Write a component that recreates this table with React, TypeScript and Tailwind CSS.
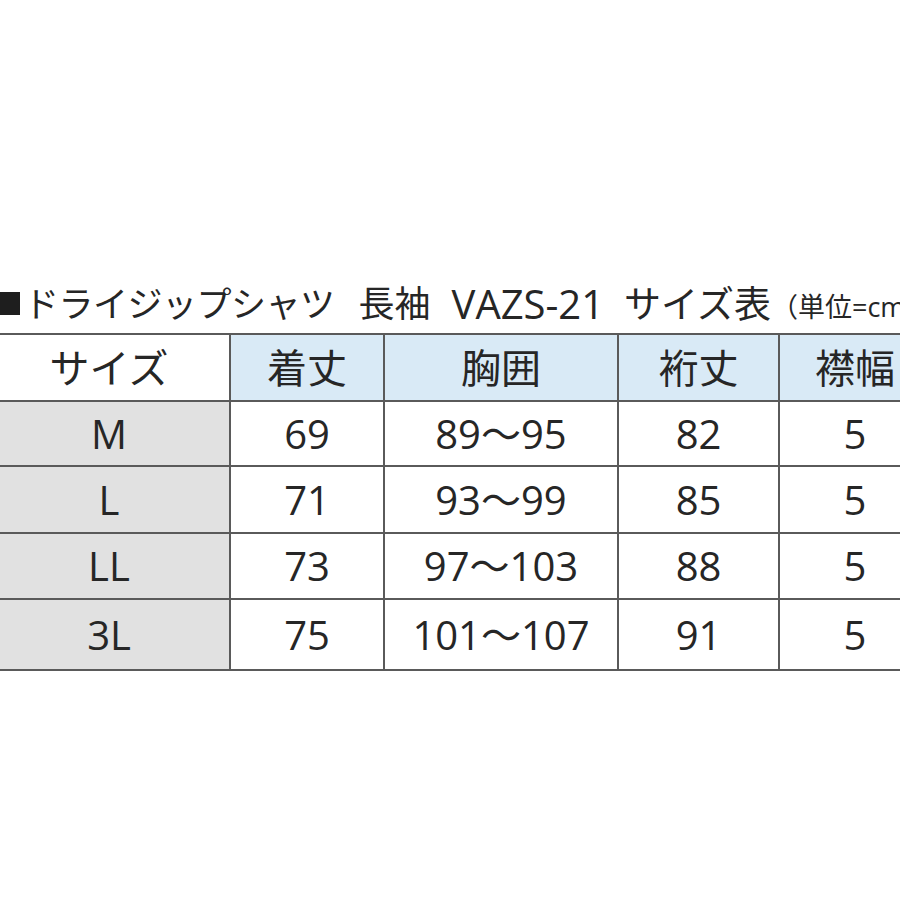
import React from "react";

const rows = [
  ["M", "69", "89～95", "82", "5"],
  ["L", "71", "93～99", "85", "5"],
  ["LL", "73", "97～103", "88", "5"],
  ["3L", "75", "101～107", "91", "5"],
];

const heads = ["着丈", "胸囲", "裄丈", "襟幅"];
const rowH = ["h-[63px]", "h-[65px]", "h-[64px]", "h-[69px]"];

const font = { fontFamily: '"Open Sans", "Noto Sans CJK JP", sans-serif' };

export default function App() {
  return (
    <div className="w-[900px] h-[900px] bg-white overflow-hidden text-[#262626]" style={font}>
      <div className="h-[274px]" />
      <div className="h-[59px] flex items-center whitespace-nowrap">
        <div className="w-[20px] h-[23px] bg-[#1e1e1e] shrink-0" />
        <span className="ml-[4px] text-[35px] leading-none tracking-[-0.5px]">ドライジップシャツ</span>
        <span className="ml-[24px] text-[36px] leading-none">長袖</span>
        <span className="ml-[21px] text-[40px] leading-none">VAZS-21</span>
        <span className="ml-[20px] text-[37px] leading-none">サイズ表</span>
        <span className="text-[27px] leading-none mt-[6px]">（単位=cm）</span>
      </div>
      <div className="ml-[-11px] w-[960px] bg-[#5a5a5a] py-[2px] grid grid-cols-[240px_152px_232px_159px_150px] gap-[2px]">
        <div className="h-[65px] bg-white flex items-center justify-center text-[40px]">サイズ</div>
        {heads.map((h) => (
          <div key={h} className="h-[65px] bg-[#d9eaf6] flex items-center justify-center text-[40px]">
            {h}
          </div>
        ))}
        {rows.map((r, i) =>
          r.map((c, j) => (
            <div
              key={i + "-" + j}
              className={
                rowH[i] +
                " flex items-center justify-center text-[40px] " +
                (j === 0 ? "bg-[#e1e1e1]" : "bg-white")
              }
            >
              {c}
            </div>
          ))
        )}
      </div>
    </div>
  );
}
